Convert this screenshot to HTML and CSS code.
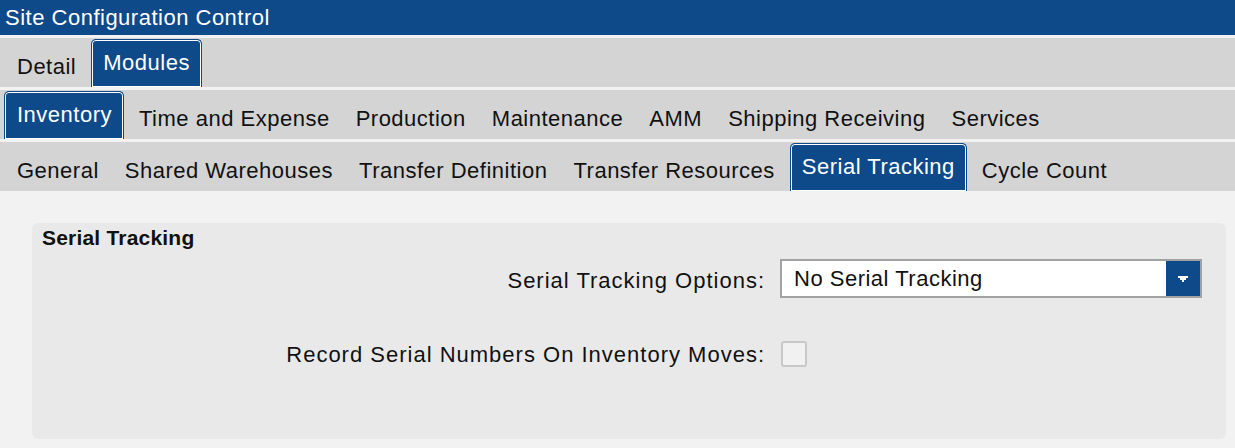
FILE: index.html
```html
<!DOCTYPE html>
<html lang="en">
<head>
    <meta charset="UTF-8">
    <title>Site Configuration Control</title>
    <link rel="stylesheet" href="styles.css">
</head>
<body>

<div class="titlebar">Site Configuration Control</div>

<div class="tabrow">
    <span class="tab">Detail</span>
    <span class="tab active">Modules</span>
</div>

<div class="tabrow">
    <span class="tab active">Inventory</span>
    <span class="tab">Time and Expense</span>
    <span class="tab">Production</span>
    <span class="tab">Maintenance</span>
    <span class="tab">AMM</span>
    <span class="tab">Shipping Receiving</span>
    <span class="tab">Services</span>
</div>

<div class="tabrow">
    <span class="tab">General</span>
    <span class="tab">Shared Warehouses</span>
    <span class="tab">Transfer Definition</span>
    <span class="tab">Transfer Resources</span>
    <span class="tab active">Serial Tracking</span>
    <span class="tab">Cycle Count</span>
</div>

<div class="content">
    <div class="panel">
        <h2 class="panel_title">Serial Tracking</h2>
        <div class="form">
            <label class="field_label select_label">Serial Tracking Options:</label>
            <div class="select">
                <span class="select_value">No Serial Tracking</span>
                <span class="select_button">
                    <svg width="10" height="6" viewBox="0 0 10 6"><path d="M0 0H10V2H8V4H6V6H4V4H2V2H0Z" fill="#fff"/></svg>
                </span>
            </div>

            <label class="field_label">Record Serial Numbers On Inventory Moves:</label>
            <div><span class="checkbox"></span></div>
        </div>
    </div>
</div>

</body>
</html>
```

FILE: styles.css
```css
body {
    margin: 0;
    background-color: #f2f2f3;
    font-family: "Liberation Sans", Arial, sans-serif;
    font-size: 22px;
    letter-spacing: 0.5px;
    color: #111;
}

.titlebar {
    height: 35px;
    box-sizing: border-box;
    padding: 5px 5px 0;
    line-height: 25px;
    background-color: #0e4a89;
    color: white;
    margin-bottom: 3px;
}

.tabrow {
    display: flex;
    height: 49px;
    padding-left: 4px;
    background-color: #d4d4d4;
    margin-bottom: 3px;
}

.tab {
    padding: 16px 13px 0;
    line-height: 25px;
    white-space: nowrap;
}

.tab.active {
    margin: 1px 2px 0;
    padding: 10px 11px 0;
    background-color: #0e4a89;
    border: 1px solid #0e4a89;
    border-bottom: none;
    border-radius: 5px 5px 0 0;
    box-shadow: inset 0 0 0 1px white;
    color: white;
}

.tabrow:nth-child(3) .tab.active {
    margin-left: 0;
    padding-left: 12px;
}

.content {
    padding: 29px 9px 0 32px;
}

.panel {
    background-color: #e9e9e9;
    border-radius: 6px;
    padding: 3px 24px 72px 10px;
}

.panel_title {
    margin: 0 0 9px;
    font-size: 21px;
    letter-spacing: 0.2px;
    line-height: 24px;
    font-weight: bold;
}

.form {
    display: grid;
    grid-template-columns: 723px 1fr;
    column-gap: 15px;
    row-gap: 43px;
    align-items: center;
}

.field_label {
    text-align: right;
    line-height: 25px;
    letter-spacing: 1px;
    white-space: nowrap;
}

.select_label {
    padding-top: 4px;
}

.select {
    display: flex;
    height: 39px;
    box-sizing: border-box;
    border: 2px solid #a2a2a2;
    background-color: white;
}

.select_value {
    flex: 1;
    padding: 5px 12px 0;
    line-height: 25px;
}

.select_button {
    width: 34px;
    background-color: #0e4a89;
    display: flex;
    align-items: center;
    justify-content: center;
}

.checkbox {
    display: block;
    width: 26px;
    height: 26px;
    margin-left: 1px;
    box-sizing: border-box;
    border: 2px solid #c8c8c8;
    border-radius: 3px;
    background-color: #f1f1f1;
}
```
